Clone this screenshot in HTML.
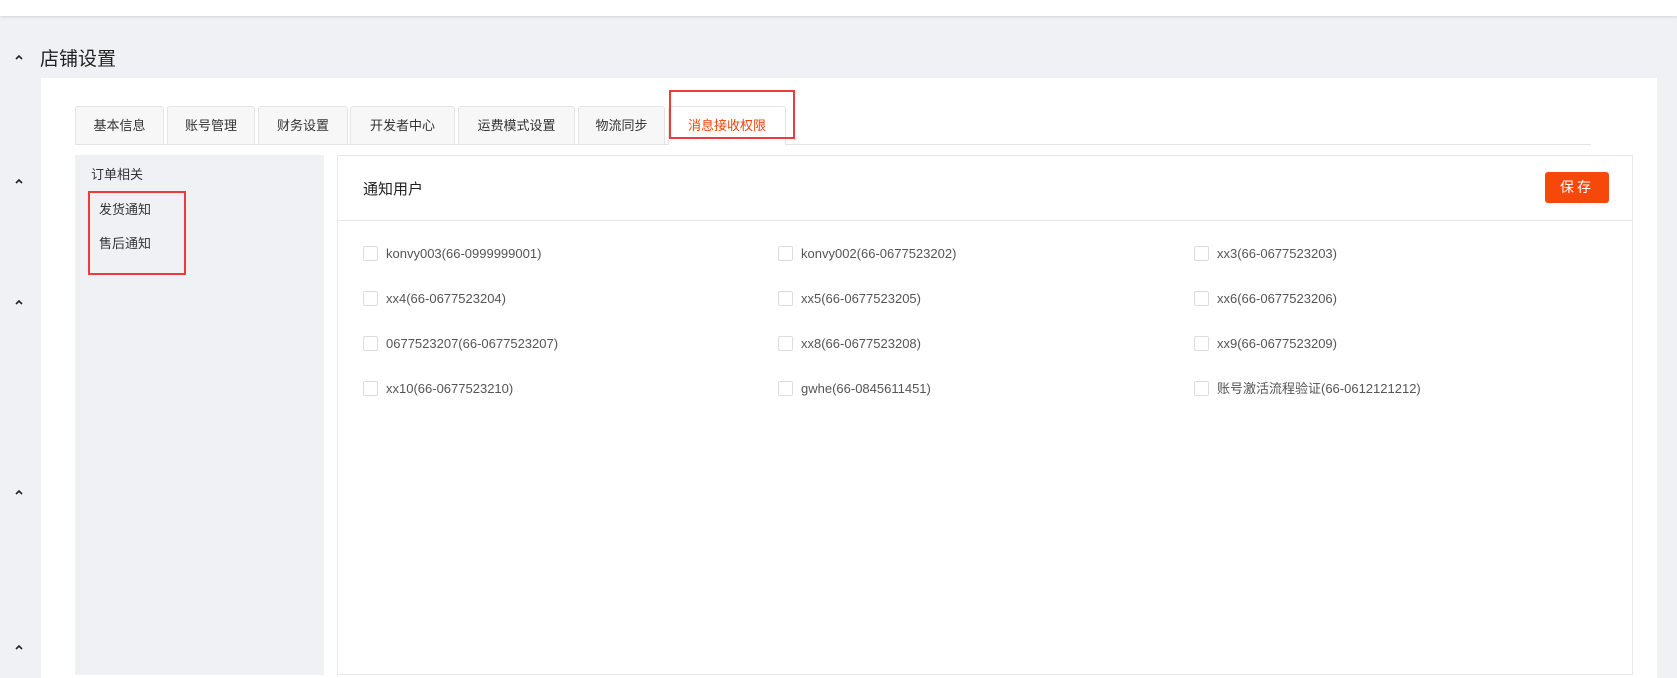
<!DOCTYPE html>
<html><head><meta charset="utf-8"><style>
*{margin:0;padding:0;box-sizing:border-box}
body{width:1677px;height:672px;overflow:hidden;background:#f0f1f5;font-family:"Liberation Sans","Noto Sans CJK SC",sans-serif;position:relative;color:#333}
.hdr{position:absolute;left:0;top:0;width:1677px;height:16px;background:#fff;box-shadow:0 1px 3px rgba(0,0,0,.12)}
.chev{position:absolute;left:15px;width:8px;height:6px}
.title{position:absolute;left:40px;top:44px;font-size:19px;color:#222}
.card{position:absolute;left:41px;top:78px;width:1616px;height:600px;background:#fff}
.tab{position:absolute;top:106px;height:38px;border:1px solid #e4e4e4;border-bottom:none;background:#f7f7f7;border-radius:3px 3px 0 0;font-size:13px;color:#333;text-align:center;line-height:38px}
.tab.act{background:#fff;color:#f5410a;height:39px}
.tabline{position:absolute;left:75px;top:144px;width:1516px;height:1px;background:#e4e4e4}
.red{position:absolute;border:2px solid #f03a3a}
.side{position:absolute;left:75px;top:155px;width:249px;height:520px;background:#f0f1f5}
.si{position:absolute;font-size:13px;color:#333}
.panel{position:absolute;left:337px;top:155px;width:1296px;height:520px;border:1px solid #e8e8e8;background:#fff}
.ph{height:65px;border-bottom:1px solid #e8e8e8}
.pt{position:absolute;left:25px;top:22px;font-size:15px;color:#222}
.btn{position:absolute;left:1207px;top:16px;width:64px;height:31px;background:#f5480a;border-radius:3px;color:#fff;font-size:14px;text-align:center;line-height:31px;letter-spacing:3px}
.cb{position:absolute;width:15px;height:15px;border:1px solid #ddd;border-radius:2px;background:#fff}
.lb{position:absolute;font-size:13px;color:#555;white-space:nowrap;line-height:16px}
</style></head><body>
<div class="hdr"></div>
<svg class="chev" style="top:54px" viewBox="0 0 8 6"><path d="M1 5L4 2L7 5" stroke="#222" stroke-width="1.6" fill="none"/></svg>
<svg class="chev" style="top:178px" viewBox="0 0 8 6"><path d="M1 5L4 2L7 5" stroke="#222" stroke-width="1.6" fill="none"/></svg>
<svg class="chev" style="top:299px" viewBox="0 0 8 6"><path d="M1 5L4 2L7 5" stroke="#222" stroke-width="1.6" fill="none"/></svg>
<svg class="chev" style="top:489px" viewBox="0 0 8 6"><path d="M1 5L4 2L7 5" stroke="#222" stroke-width="1.6" fill="none"/></svg>
<svg class="chev" style="top:644px" viewBox="0 0 8 6"><path d="M1 5L4 2L7 5" stroke="#222" stroke-width="1.6" fill="none"/></svg>
<div class="title">店铺设置</div>
<div class="card"></div>
<div class="tab" style="left:75px;width:89px">基本信息</div>
<div class="tab" style="left:167px;width:88px">账号管理</div>
<div class="tab" style="left:258px;width:90px">财务设置</div>
<div class="tab" style="left:350px;width:105px">开发者中心</div>
<div class="tab" style="left:458px;width:117px">运费模式设置</div>
<div class="tab" style="left:578px;width:87px">物流同步</div>
<div class="tabline"></div>
<div class="tab act" style="left:668px;width:118px">消息接收权限</div>
<div class="red" style="left:669px;top:90px;width:126px;height:49px"></div>
<div class="side"></div>
<div class="si" style="left:91px;top:164px">订单相关</div>
<div class="si" style="left:99px;top:199px">发货通知</div>
<div class="si" style="left:99px;top:233px">售后通知</div>
<div class="red" style="left:88px;top:191px;width:98px;height:84px"></div>
<div class="panel">
<div class="ph"><div class="pt">通知用户</div><div class="btn">保存</div></div>
</div>
<div class="cb" style="left:363px;top:246px"></div><div class="lb" style="left:386px;top:246px">konvy003(66-0999999001)</div>
<div class="cb" style="left:778px;top:246px"></div><div class="lb" style="left:801px;top:246px">konvy002(66-0677523202)</div>
<div class="cb" style="left:1194px;top:246px"></div><div class="lb" style="left:1217px;top:246px">xx3(66-0677523203)</div>
<div class="cb" style="left:363px;top:291px"></div><div class="lb" style="left:386px;top:291px">xx4(66-0677523204)</div>
<div class="cb" style="left:778px;top:291px"></div><div class="lb" style="left:801px;top:291px">xx5(66-0677523205)</div>
<div class="cb" style="left:1194px;top:291px"></div><div class="lb" style="left:1217px;top:291px">xx6(66-0677523206)</div>
<div class="cb" style="left:363px;top:336px"></div><div class="lb" style="left:386px;top:336px">0677523207(66-0677523207)</div>
<div class="cb" style="left:778px;top:336px"></div><div class="lb" style="left:801px;top:336px">xx8(66-0677523208)</div>
<div class="cb" style="left:1194px;top:336px"></div><div class="lb" style="left:1217px;top:336px">xx9(66-0677523209)</div>
<div class="cb" style="left:363px;top:381px"></div><div class="lb" style="left:386px;top:381px">xx10(66-0677523210)</div>
<div class="cb" style="left:778px;top:381px"></div><div class="lb" style="left:801px;top:381px">gwhe(66-0845611451)</div>
<div class="cb" style="left:1194px;top:381px"></div><div class="lb" style="left:1217px;top:381px">账号激活流程验证(66-0612121212)</div>
</body></html>
